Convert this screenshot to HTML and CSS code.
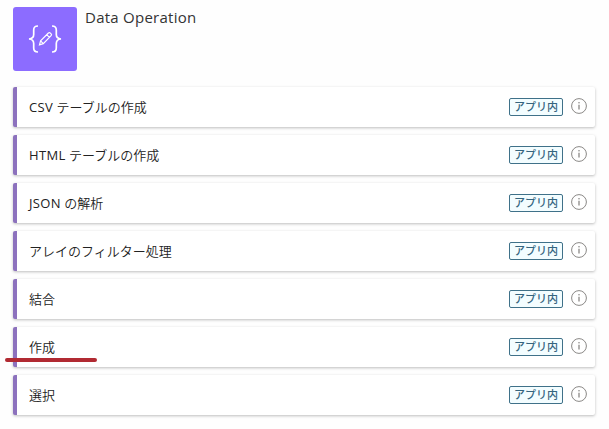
FILE: index.html
```
<!DOCTYPE html>
<html lang="ja">
<head>
    <meta charset="UTF-8">
    <meta name="viewport" content="width=device-width, initial-scale=1.0">
    <title>Data Operation</title>
    <link rel="stylesheet" href="styles.css">
</head>
<body>
    <svg class="symbols" width="0" height="0">
        <symbol id="info" viewBox="0 0 16 16">
            <circle cx="8" cy="8" r="7.4" fill="none" stroke="currentColor" stroke-width="1"/>
            <path d="M8 6.7v4.8" stroke="currentColor" stroke-width="1.3"/>
            <circle cx="8" cy="4.7" r="0.8" fill="currentColor"/>
        </symbol>
    </svg>

    <div class="header">
        <div class="logo">
            <svg width="34" height="28" viewBox="0 0 34 28" fill="none" stroke="#fff" stroke-width="1.7">
                <path d="M10 1C6.8 1 5.7 2.3 5.7 5v4.5c0 2.6-1 4.2-4.7 4.5 3.7.3 4.7 1.9 4.7 4.5V23c0 2.7 1.1 4 4.3 4"/>
                <path d="M24 1c3.2 0 4.3 1.3 4.3 4v4.5c0 2.6 1 4.2 4.7 4.5-3.7.3-4.7 1.9-4.7 4.5V23c0 2.7-1.1 4-4.3 4"/>
                <path d="M11.5 19.8l1.1-4L20.4 8c.7-.6 1.4-.5 2 .1l.7.7c.6.6.6 1.3 0 1.9l-7.8 7.9zM18.7 9.7l2.7 2.7M12.6 15.8l2.7 2.8" stroke-width="1.2"/>
            </svg>
        </div>
        <h1>Data Operation</h1>
    </div>

    <div class="actions">
        <div class="action">
            <span class="name"><b>CSV</b> テーブルの作成</span>
            <span class="tag">アプリ内</span>
            <svg class="info"><use href="#info"/></svg>
        </div>
        <div class="action">
            <span class="name"><b>HTML</b> テーブルの作成</span>
            <span class="tag">アプリ内</span>
            <svg class="info"><use href="#info"/></svg>
        </div>
        <div class="action">
            <span class="name"><b>JSON</b> の解析</span>
            <span class="tag">アプリ内</span>
            <svg class="info"><use href="#info"/></svg>
        </div>
        <div class="action">
            <span class="name">アレイのフィルター処理</span>
            <span class="tag">アプリ内</span>
            <svg class="info"><use href="#info"/></svg>
        </div>
        <div class="action">
            <span class="name">結合</span>
            <span class="tag">アプリ内</span>
            <svg class="info"><use href="#info"/></svg>
        </div>
        <div class="action marked">
            <span class="name">作成</span>
            <span class="tag">アプリ内</span>
            <svg class="info"><use href="#info"/></svg>
        </div>
        <div class="action">
            <span class="name">選択</span>
            <span class="tag">アプリ内</span>
            <svg class="info"><use href="#info"/></svg>
        </div>
    </div>
</body>
</html>
```

FILE: styles.css
```
body {
    font-family: "Open Sans", "Noto Sans CJK JP", sans-serif;
    background: #fefefe;
    color: #333;
    margin: 0;
    padding: 7px 14px 14px 13px;
}

.symbols {
    position: absolute;
}

/* Connector header */
.header {
    display: flex;
    gap: 8px;
    margin-bottom: 16px;
}

.logo {
    display: flex;
    align-items: center;
    justify-content: center;
    width: 64px;
    height: 64px;
    background: #8c6cff;
    border-radius: 3px;
}

h1 {
    font-size: 15px;
    font-weight: 500;
    letter-spacing: 0.25px;
    line-height: 20px;
    margin: 0;
    color: #333;
}

/* Action list */
.actions {
    display: flex;
    flex-direction: column;
    gap: 8px;
}

.action {
    position: relative;
    display: flex;
    align-items: center;
    box-sizing: border-box;
    height: 40px;
    padding: 0 8px 0 12px;
    background: #fff;
    border-left: 4px solid #8c71bd;
    border-radius: 2px;
    box-shadow: 0 1px 3px rgba(0, 0, 0, 0.26);
}

.name {
    flex: 1;
    font-size: 13px;
    font-weight: 350;
    line-height: 20px;
    color: #222;
}

.name b {
    font-weight: 500;
    letter-spacing: 0.35px;
    color: #222;
}

.tag {
    box-sizing: border-box;
    width: 54px;
    height: 18px;
    margin-right: 8px;
    border: 1px solid #3f7189;
    border-radius: 2px;
    background: #f3fdff;
    color: #35657f;
    font-size: 11px;
    font-weight: 500;
    line-height: 16px;
    text-align: center;
}

.info {
    width: 16px;
    height: 16px;
    margin-bottom: 2px;
    color: #8a8886;
}

/* Red underline drawn over the row */
.marked::after {
    content: "";
    position: absolute;
    left: -12px;
    bottom: 5px;
    width: 92px;
    height: 4px;
    border-radius: 2px;
    background: #b12a32;
}
```
